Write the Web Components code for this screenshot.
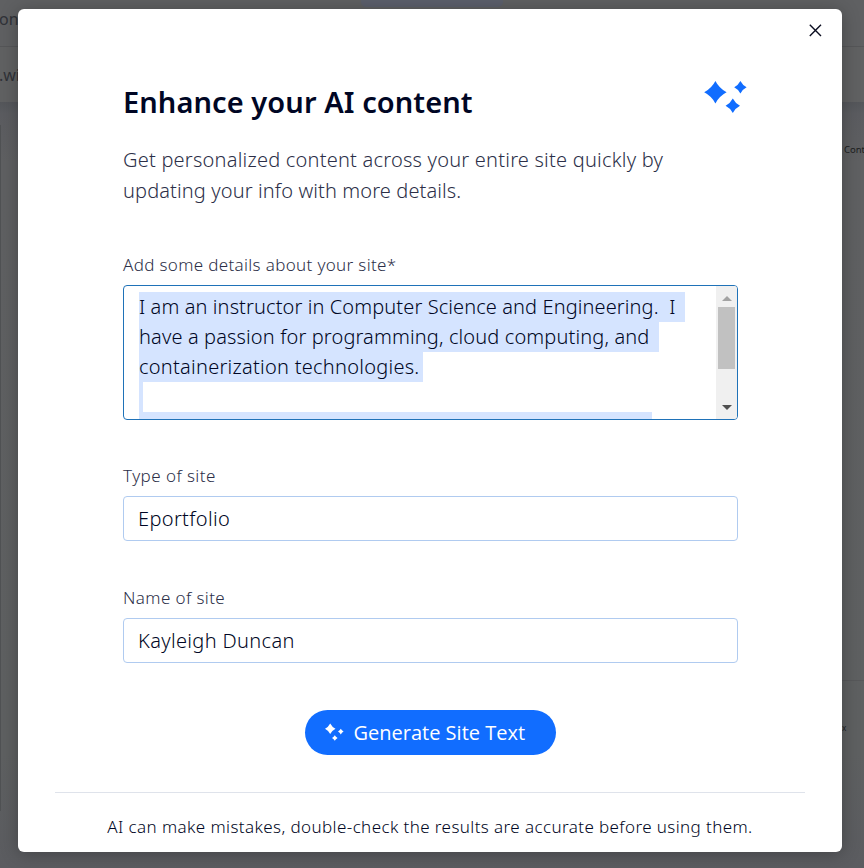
<!DOCTYPE html>
<html lang="en"><head><meta charset="utf-8"><title>Enhance your AI content</title>
<style>html,body{margin:0;height:868px;overflow:hidden;font-family:"Noto Sans","Open Sans",sans-serif;font-weight:300;background:#5f6062}</style></head>
<body>
<editor-backdrop></editor-backdrop>
<ai-dialog>
  <site-field label="Add some details about your site*"><details-area></details-area></site-field>
  <site-field class="type" label="Type of site" style="--ls:.45px"><text-box>Eportfolio</text-box></site-field>
  <site-field class="name" label="Name of site" style="--ls:.4px"><text-box>Kayleigh Duncan</text-box></site-field>
  <generate-button>Generate Site Text</generate-button>
</ai-dialog>
<script>
const star=(x,y,r)=>{const k=r*.34;return `<path d="M${x} ${y-r}Q${x+k} ${y-k} ${x+r} ${y}Q${x+k} ${y+k} ${x} ${y+r}Q${x-k} ${y+k} ${x-r} ${y}Q${x-k} ${y-k} ${x} ${y-r}Z"/>`};
const define=(name,html)=>customElements.define(name,class extends HTMLElement{
  connectedCallback(){ if(this.shadowRoot)return; this.attachShadow({mode:'open'}).innerHTML=typeof html==='function'?html(this):html; }
});

define('editor-backdrop',`<style>
:host{display:flex;flex-direction:column;height:868px;color:#303238;font:400 16px "Noto Sans",sans-serif}
.bar{box-sizing:border-box;height:47px;border-bottom:1px solid #555658;background:#5f6062;display:flex;justify-content:center;position:relative}
.url{height:55px;border-bottom:0;background:#606162}
.tab{width:142px;height:7px;background:#5b5f6b;border-radius:0 0 5px 5px}
.word{position:absolute;left:-1px;top:8px}
.url .word{left:-1px;top:17px}
.stage{flex:1;position:relative;background:linear-gradient(#54565a 0,#5b5c60 12px,#5f6062 60px,#5e6061 650px,#5b5c60 766px)}
.edge{position:absolute;left:0;top:23px;width:1px;height:686px;background:#505254}
.rule{position:absolute;right:0;width:22px;top:578px;height:1px;background:#57585a}
.c{position:absolute;left:844px;top:42px;font-size:9.5px;line-height:12px;color:#1c1d20}
.a{position:absolute;left:842px;top:620px;font-size:8px;line-height:12px;color:#1c1d20}
</style>
<div class="bar"><span class="word">on</span><div class="tab"></div></div>
<div class="bar url"><span class="word">.wi</span></div>
<div class="stage"><div class="edge"></div><span class="c">Cont</span><div class="rule"></div><span class="a">x</span></div>`);

define('spark-icon',`<style>:host{display:block;width:44px;height:34px;fill:#116dff}svg{display:block}</style>
<svg width="44" height="34" viewBox="0 0 44 34">${star(11.4,12.3,11.2)}${star(36.4,7.3,6.2)}${star(28.8,25.8,7.2)}</svg>`);

define('close-icon',`<style>:host{display:block;width:14px;height:14px}svg{display:block}</style>
<svg width="14" height="14" viewBox="0 0 14 14" fill="none" stroke="#0b0d20" stroke-width="1.4"><path d="M1.8 1.8 13 13M13 1.8 1.8 13"/></svg>`);

define('ai-dialog',`<style>
:host{position:absolute;left:18px;top:9px;width:824px;height:843px;box-sizing:border-box;padding:0 104px 0 105px;background:#fff;border-radius:6px;box-shadow:0 2px 18px rgba(0,0,0,.28);display:flex;flex-direction:column}
close-icon{position:absolute;right:20px;top:14px}
header{height:39px;margin-top:71px;display:flex;justify-content:space-between}
spark-icon{margin-right:-10px}
h1{margin:0;padding-top:2px;font-size:29px;line-height:40px;font-weight:600;letter-spacing:.08px;color:#000624}
p{margin:25px 0 0;font-size:20px;line-height:31px;color:#2c2f48;white-space:nowrap;letter-spacing:.22px}
p span{letter-spacing:.12px}
main{margin-top:47px;display:flex;flex-direction:column}
::slotted(.type){margin-top:44px}
::slotted(.name){margin-top:45px}
::slotted(generate-button){margin-top:47px;align-self:center}
footer{margin:37px -67px 0 -68px;border-top:1px solid #dfe3eb;padding-top:21px;text-align:center;font-size:17px;line-height:26px;color:#000624;white-space:nowrap;letter-spacing:.4px}
</style>
<close-icon></close-icon>
<header><h1>Enhance your AI content</h1><spark-icon></spark-icon></header>
<p>Get personalized content across your entire site quickly by<br><span>updating your info with more details.</span></p>
<main><slot></slot></main>
<footer>AI can make mistakes, double-check the results are accurate before using them.</footer>`);

define('site-field',e=>`<style>:host{display:block}label{display:block;font-size:17px;line-height:24px;height:32px;letter-spacing:var(--ls,.34px);color:#2c2f48}</style>
<label>${e.getAttribute('label')}</label><slot></slot>`);

define('text-box',`<style>:host{display:block;box-sizing:border-box;height:45px;border:1px solid #b0cbf0;border-radius:4px;padding:0 14px;font-size:20px;line-height:44px;letter-spacing:.35px;color:#000624}</style><slot></slot>`);

define('details-area',`<style>
:host{box-sizing:border-box;height:135px;border:1px solid #1f72b8;border-radius:4px;display:flex;overflow:hidden;font-size:20px;line-height:30px;color:#000624}
.text{flex:1;padding:6px 0 0 15px;height:127px;overflow:hidden;display:flex;flex-direction:column;align-items:flex-start}
.text div{flex:none;height:30px;background:#d5e4ff;white-space:pre}
.bar{width:21px;background:#f0f0f0;display:flex;flex-direction:column;align-items:center}
.thumb{width:17px;height:62px;background:#c1c1c1;margin:5px 0 35px}
svg{display:block;flex:none}
.up{margin-top:9px}
</style>
<div class="text"><div style="width:546px;letter-spacing:.1px">I am an instructor in Computer Science and Engineering.&nbsp; I</div><div style="width:520px;letter-spacing:.13px">have a passion for programming, cloud computing, and</div><div style="width:284px;letter-spacing:.26px">containerization technologies.</div><div style="width:4px"></div><div style="width:513px"></div></div>
<div class="bar"><svg class="up" width="10" height="7" viewBox="0 0 10 7"><path d="M0 6 5 1 10 6Z" fill="#a3a3a3"/></svg><div class="thumb"></div><svg width="10" height="7" viewBox="0 0 10 7"><path d="M0 1 5 6 10 1Z" fill="#505050"/></svg></div>`);

define('generate-button',`<style>
:host{display:flex;align-items:center;box-sizing:border-box;width:251px;height:45px;border-radius:23px;background:#116dff;color:#fff;padding-left:20px;gap:9.5px;font:500 20px "Open Sans",sans-serif;white-space:nowrap}
svg{display:block;fill:#fff;flex:none}
</style><svg width="19" height="19" viewBox="0 0 19 19">${star(5.2,5.8,5.3)}${star(15.8,8.6,2.8)}${star(9.8,15,2.8)}</svg><slot></slot>`);
</script>
</body></html>
